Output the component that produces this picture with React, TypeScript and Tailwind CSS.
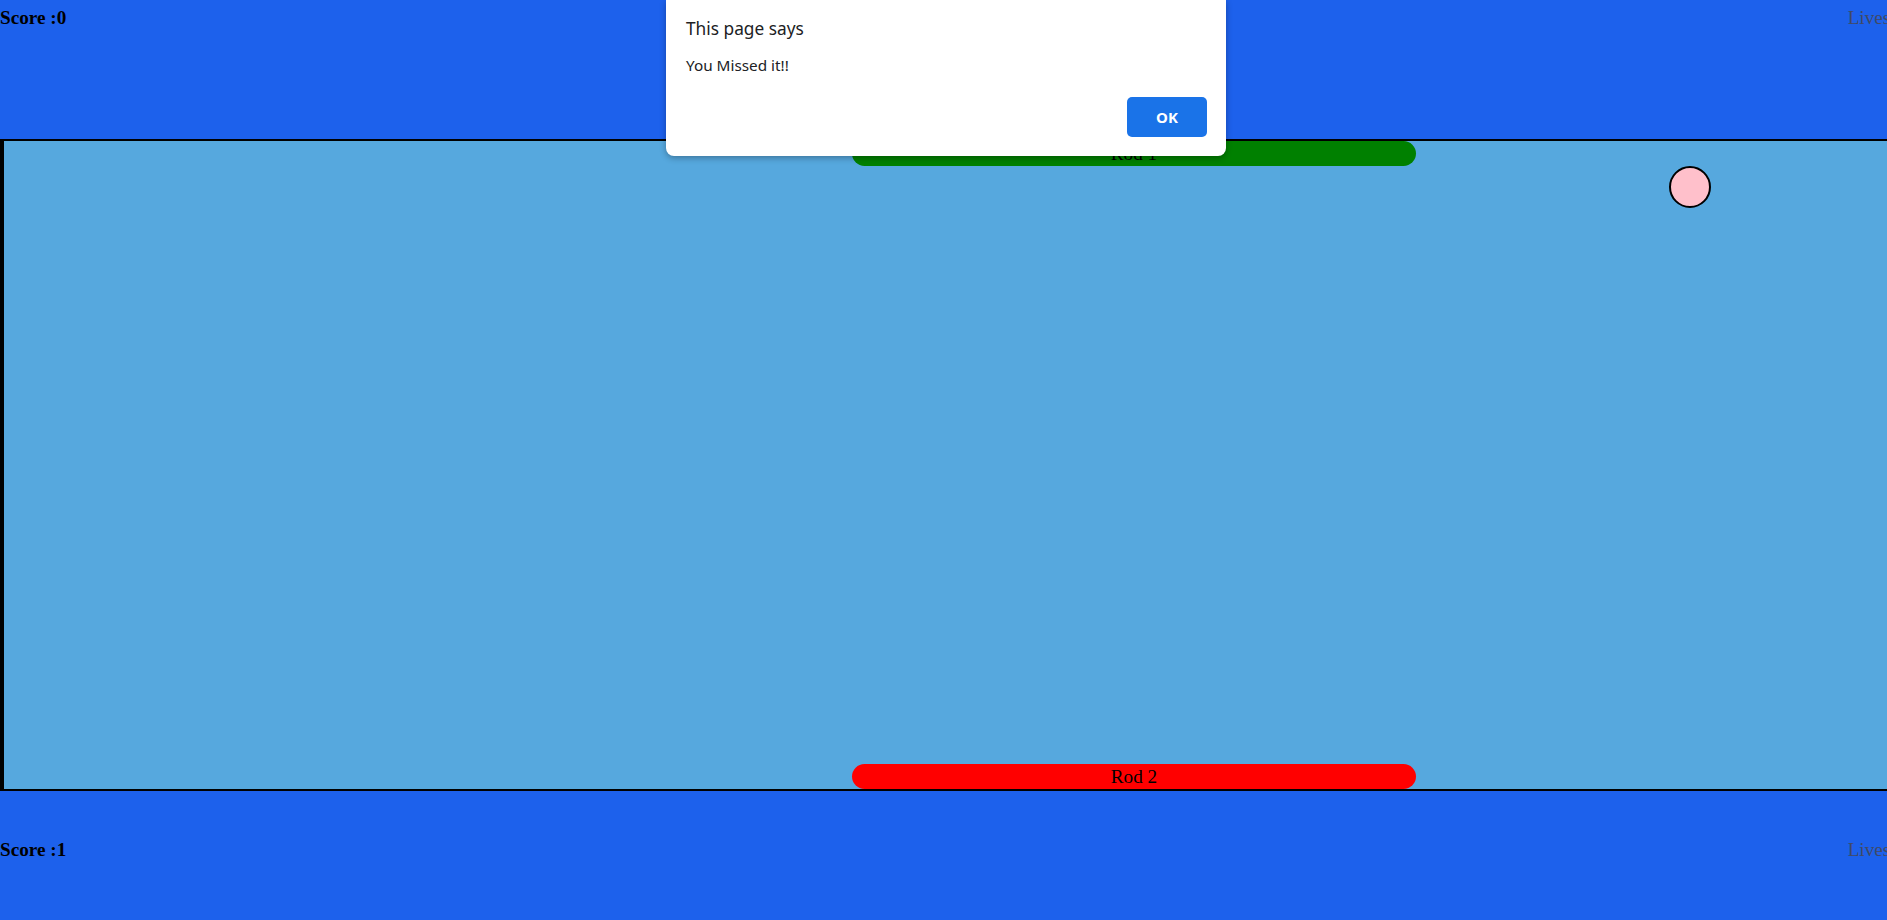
import React from "react";

const board = {
	scoreTop: 0,
	scoreBottom: 1,
	lives: 3,
	ball: { x: 1665, y: 25 },
};

const Rod = ({ label, color }: { label: string; color: string }) => {
	return (
		<div
			className={`ml-[848px] w-[564px] h-[25px] rounded-full text-center leading-[25px] text-black ${color}`}
		>
			{label}
		</div>
	);
};

const AlertBox = () => {
	return (
		<div className="absolute top-0 left-[666px] w-[560px] h-[156px] bg-white rounded-b-[8px] shadow-[0_2px_6px_rgba(0,0,0,0.3)] font-['Noto_Sans',sans-serif] text-[#202124]">
			<p className="pl-5 pt-[17px] text-[17.3px] leading-[24px]">This page says</p>
			<p className="pl-5 mt-[14px] text-[15.3px] leading-[20px]">You Missed it!!</p>
			<div className="flex justify-end pr-[19px] mt-[22px]">
				<button className="w-[80px] h-[40px] rounded-[5px] bg-[#1a73e8] text-white font-bold text-[15px]">
					OK
				</button>
			</div>
		</div>
	);
};

export default function App() {
	return (
		<div className="relative w-full h-[920px] overflow-hidden font-['Liberation_Serif',serif] text-[19.2px]">
			<div className="w-[1910px]">
				<div className="h-[139px] bg-[#1d61ec] flex justify-between items-start pt-[7px] leading-[22px]">
					<span className="font-bold text-black">Score :{board.scoreTop}</span>
					<span className="text-[#404a66]">Lives :{board.lives}</span>
				</div>
				<div className="relative h-[652px] bg-[#56a8de] border-y-2 border-l-4 border-black flex flex-col justify-between">
					<Rod label="Rod 1" color="bg-[#008000]" />
					<div
						className="absolute w-[42px] h-[42px] rounded-full bg-[#ffc0cb] border-2 border-black"
						style={{ left: board.ball.x, top: board.ball.y }}
					/>
					<Rod label="Rod 2" color="bg-[#ff0000]" />
				</div>
				<div className="h-[140px] bg-[#1d61ec] flex justify-between items-start pt-[48px] leading-[22px]">
					<span className="font-bold text-black">Score :{board.scoreBottom}</span>
					<span className="text-[#404a66]">Lives :{board.lives}</span>
				</div>
			</div>
			<AlertBox />
		</div>
	);
}
